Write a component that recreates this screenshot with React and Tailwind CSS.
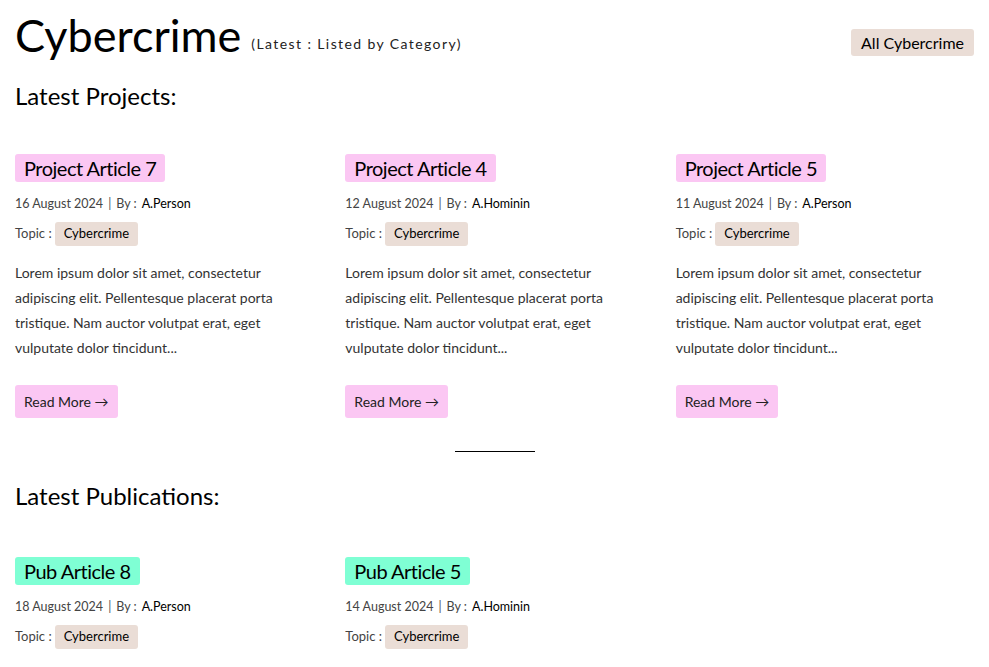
import React from "react";

const projects = [
  { title: "Project Article 7", date: "16 August 2024", author: "A.Person" },
  { title: "Project Article 4", date: "12 August 2024", author: "A.Hominin" },
  { title: "Project Article 5", date: "11 August 2024", author: "A.Person" },
];
const pubs = [
  { title: "Pub Article 8", date: "18 August 2024", author: "A.Person" },
  { title: "Pub Article 5", date: "14 August 2024", author: "A.Hominin" },
];

function Card({ item, color, body }) {
  return (
    <div className="flex flex-col items-start">
      <div className={`${color} rounded-[3px] px-[9px] h-[28px] flex items-center text-[20px] tracking-[-0.5px] text-black`}>
        {item.title}
      </div>
      <div className="mt-[14px] text-[12.5px] text-[#444] h-[16px] flex items-center">
        <span>{item.date}</span>
        <span className="mx-[5px] text-[#555]">|</span>
        <span>By :</span>
        <span className="ml-[5px] text-black">{item.author}</span>
      </div>
      <div className="mt-[10px] flex items-center text-[13px] text-[#444]">
        <span>Topic :</span>
        <span className="ml-[3px] bg-[#eaddd6] rounded-[3px] h-[24px] px-[9px] flex items-center text-black">
          Cybercrime
        </span>
      </div>
      {body && (
        <>
          <p className="mt-[14px] text-[14px] leading-[25px] text-[#333] w-[298px]">
            Lorem ipsum dolor sit amet, consectetur adipiscing elit. Pellentesque placerat porta
            tristique. Nam auctor volutpat erat, eget vulputate dolor tincidunt...
          </p>
          <button className={`${color} mt-[25px] rounded-[3px] h-[33px] px-[9px] text-[14px] text-[#222]`}>
            Read More →
          </button>
        </>
      )}
    </div>
  );
}

export default function App() {
  return (
    <div className="bg-white min-h-[667px] px-[15px] text-black" style={{ fontFamily: "Lato, 'Noto Sans', sans-serif" }}>
      <div className="flex items-start justify-between pt-[7px]">
        <div className="flex items-end">
          <h1 className="text-[45px] leading-[56px]">Cybercrime</h1>
          <span className="ml-[10px] mb-[9px] text-[14px] leading-[20px] tracking-[1.4px] text-[#222]">(Latest : Listed by Category)</span>
        </div>
        <div className="mt-[22px] bg-[#eaddd6] rounded-[3px] h-[27px] px-[10px] flex items-center text-[16px] text-black">
          All Cybercrime
        </div>
      </div>
      <h2 className="mt-[18px] text-[24px] leading-[30px]">Latest Projects:</h2>
      <div className="mt-[43px] grid grid-cols-3 gap-x-[32px]">
        {projects.map((p) => (
          <Card key={p.title} item={p} color="bg-[#fbc7f3]" body />
        ))}
      </div>
      <div className="flex justify-center mt-[33px]">
        <div className="w-[80px] h-px bg-black" />
      </div>
      <h2 className="mt-[29px] text-[24px] leading-[30px]">Latest Publications:</h2>
      <div className="mt-[46px] grid grid-cols-3 gap-x-[32px]">
        {pubs.map((p) => (
          <Card key={p.title} item={p} color="bg-[#7fffd4]" />
        ))}
      </div>
    </div>
  );
}
